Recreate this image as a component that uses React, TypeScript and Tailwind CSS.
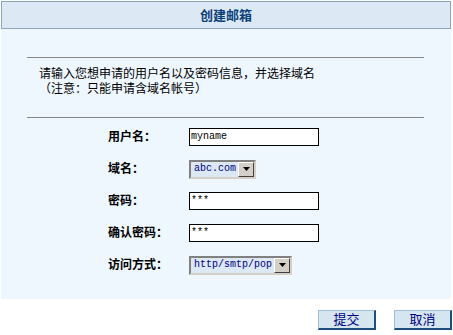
const cjk = "font-['Liberation_Sans','Noto_Sans_CJK_SC',sans-serif]";

const TextBox = ({ value }: { value: string }) => (
  <div className="w-[130px] h-[18px] border border-black bg-white flex items-center px-[1px] text-[10px] leading-none text-black font-['Liberation_Mono','Noto_Sans_CJK_SC',monospace]">
    {value}
  </div>
);

const SelectBox = ({ value, width }: { value: string; width: string }) => (
  <div
    className={`${width} h-[19px] flex border-2 border-t-[#808080] border-l-[#808080] border-r-[#d4d0c8] border-b-[#d4d0c8] bg-[#dce8f3]`}
  >
    <div className="flex-1 min-w-0 flex items-center pl-[3px] text-[10px] leading-none text-[#000080] font-['Liberation_Mono',monospace] whitespace-nowrap overflow-hidden">
      {value}
    </div>
    <div className="w-[16px] shrink-0 h-full bg-[#d4d0c8] border border-t-white border-l-white border-r-[#404040] border-b-[#404040] flex items-center justify-center">
      <svg width="7" height="4" viewBox="0 0 7 4">
        <path d="M0 0H7L3.5 4Z" fill="#000" />
      </svg>
    </div>
  </div>
);

const FormRow = ({ label, children }: { label: string; children: React.ReactNode }) => (
  <div className="h-[32px] flex items-center">
    <div className="w-[81px] ml-[107px] text-[12px] font-bold text-black">{label}</div>
    {children}
  </div>
);

const Button = ({ text }: { text: string }) => (
  <div className="w-[58px] h-[20px] flex items-center justify-center bg-[#d6e6f1] border border-t-[#9fbfd8] border-l-[#9fbfd8] border-r-2 border-b-2 border-r-[#1c4d7c] border-b-[#1c4d7c] text-[13px] text-[#000080]">
    {text}
  </div>
);

export default function App() {
  return (
    <div className={`w-[453px] h-[335px] bg-white pt-[1px] pl-[1px] ${cjk}`}>
      <div className="w-[450px] h-[28px] border border-[#8da5b9] bg-[#dce9f4] flex items-center justify-center">
        <span className="text-[13px] font-bold text-[#0b4179] leading-none">创建邮箱</span>
      </div>
      <div className="w-[450px] h-[270px] bg-[#eef6fe] pt-[28px]">
        <div className="ml-[26px] w-[397px] h-px bg-[#888888]" />
        <div className="ml-[38px] mt-[9px] text-[12px] leading-[15px] text-black">
          <div>请输入您想申请的用户名以及密码信息，并选择域名</div>
          <div>（注意：只能申请含域名帐号）</div>
        </div>
        <div className="ml-[26px] mt-[20px] w-[397px] h-px bg-[#888888]" />
        <div className="mt-[3px]">
          <FormRow label="用户名：">
            <TextBox value="myname" />
          </FormRow>
          <FormRow label="域名：">
            <SelectBox value="abc.com" width="w-[67px]" />
          </FormRow>
          <FormRow label="密码：">
            <TextBox value="***" />
          </FormRow>
          <FormRow label="确认密码：">
            <TextBox value="***" />
          </FormRow>
          <FormRow label="访问方式：">
            <SelectBox value="http/smtp/pop" width="w-[103px]" />
          </FormRow>
        </div>
      </div>
      <div className="flex justify-end gap-[18px] mt-[11px] pr-[1px]">
        <Button text="提交" />
        <Button text="取消" />
      </div>
    </div>
  );
}
